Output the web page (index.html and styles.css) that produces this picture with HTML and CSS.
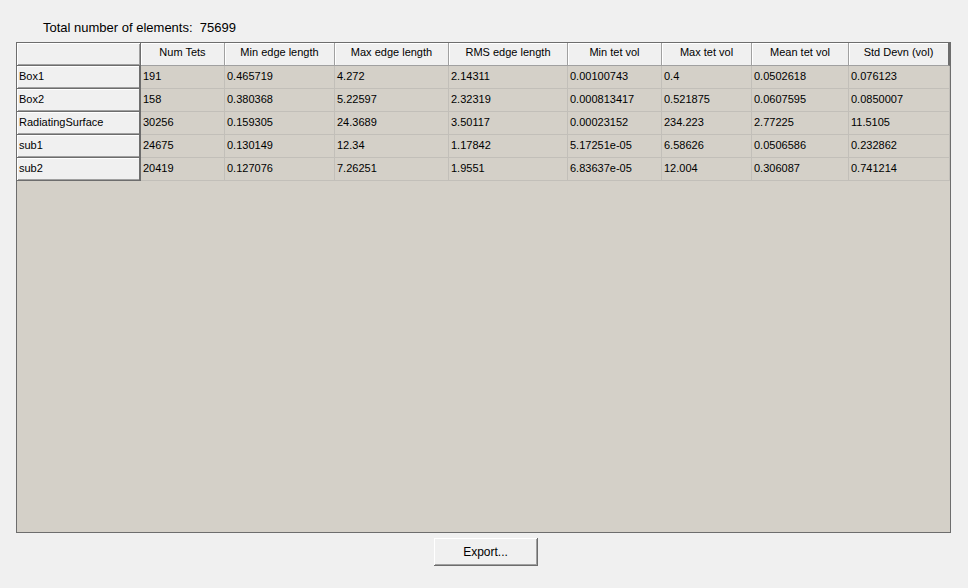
FILE: index.html
```html
<!DOCTYPE html>
<html>
<head>
<meta charset="utf-8">
<link rel="stylesheet" href="styles.css">
</head>
<body>
<div class="dialog">
  <div class="total">Total number of elements:&nbsp; 75699</div>
  <div class="table">
    <div class="grid">
      <div class="hcell corner"></div>
      <div class="hcell">Num Tets</div>
      <div class="hcell">Min edge length</div>
      <div class="hcell">Max edge length</div>
      <div class="hcell">RMS edge length</div>
      <div class="hcell">Min tet vol</div>
      <div class="hcell">Max tet vol</div>
      <div class="hcell">Mean tet vol</div>
      <div class="hcell last">Std Devn (vol)</div>

      <div class="rcell">Box1</div>
      <div class="cell">191</div><div class="cell">0.465719</div><div class="cell">4.272</div><div class="cell">2.14311</div><div class="cell">0.00100743</div><div class="cell">0.4</div><div class="cell">0.0502618</div><div class="cell">0.076123</div>

      <div class="rcell">Box2</div>
      <div class="cell">158</div><div class="cell">0.380368</div><div class="cell">5.22597</div><div class="cell">2.32319</div><div class="cell">0.000813417</div><div class="cell">0.521875</div><div class="cell">0.0607595</div><div class="cell">0.0850007</div>

      <div class="rcell">RadiatingSurface</div>
      <div class="cell">30256</div><div class="cell">0.159305</div><div class="cell">24.3689</div><div class="cell">3.50117</div><div class="cell">0.00023152</div><div class="cell">234.223</div><div class="cell">2.77225</div><div class="cell">11.5105</div>

      <div class="rcell">sub1</div>
      <div class="cell">24675</div><div class="cell">0.130149</div><div class="cell">12.34</div><div class="cell">1.17842</div><div class="cell">5.17251e-05</div><div class="cell">6.58626</div><div class="cell">0.0506586</div><div class="cell">0.232862</div>

      <div class="rcell">sub2</div>
      <div class="cell">20419</div><div class="cell">0.127076</div><div class="cell">7.26251</div><div class="cell">1.9551</div><div class="cell">6.83637e-05</div><div class="cell">12.004</div><div class="cell">0.306087</div><div class="cell">0.741214</div>
    </div>
  </div>
  <div class="actions">
    <button class="btn">Export...</button>
  </div>
</div>
</body>
</html>
```
FILE: styles.css
```css
html, body {
  margin: 0;
  padding: 0;
  background: #f0f0f0;
}
body {
  font-family: "Liberation Sans", Arial, sans-serif;
  color: #000;
}
.dialog {
  width: 968px;
  height: 588px;
  padding-top: 20px;
  box-sizing: border-box;
}
.total {
  font-size: 13px;
  line-height: 16px;
  height: 22px;
  padding-left: 43px;
  padding-top: 0;
  box-sizing: border-box;
}
.table {
  margin-left: 16px;
  width: 935px;
  height: 491px;
  box-sizing: border-box;
  border: 1px solid #6d6d6d;
  background: #d4d0c8;
}
.grid {
  display: grid;
  grid-template-columns: 124px 84px 110px 114px 119px 94px 90px 97px 101px;
  grid-auto-rows: 23px;
  font-size: 11px;
}
.hcell {
  box-sizing: border-box;
  background: #f0f0f0;
  border-right: 1px solid #a0a0a0;
  border-bottom: 1px solid #a0a0a0;
  box-shadow: inset 1px 1px #ffffff;
  display: flex;
  align-items: center;
  justify-content: center;
  padding-bottom: 4px;
  white-space: nowrap;
}
.hcell.corner {
  border-right: 1px solid #6d6d6d;
  border-bottom: 1px solid #6d6d6d;
  box-shadow: inset 1px 1px #ffffff, inset -1px -1px #a0a0a0;
}
.hcell.last {
  border-right: 2px solid #6d6d6d;
}
.rcell {
  box-sizing: border-box;
  background: #f0f0f0;
  border-right: 2px solid #6d6d6d;
  border-bottom: 1px solid #6d6d6d;
  box-shadow: inset 1px 1px #ffffff, inset 0 -1px #a0a0a0;
  display: flex;
  align-items: center;
  padding-left: 2px;
  padding-bottom: 3px;
  white-space: nowrap;
}
.cell {
  box-sizing: border-box;
  border-right: 1px solid #c2bfb9;
  border-bottom: 1px solid #c2bfb9;
  display: flex;
  align-items: center;
  padding-left: 2px;
  padding-bottom: 3px;
  white-space: nowrap;
}
.actions {
  display: flex;
  justify-content: center;
  padding-top: 5px;
  padding-left: 4px;
}
.btn {
  width: 104px;
  height: 28px;
  box-sizing: border-box;
  background: #f0f0f0;
  font-family: "Liberation Sans", Arial, sans-serif;
  font-size: 12px;
  color: #000;
  border: none;
  border-right: 1px solid #6d6d6d;
  border-bottom: 1px solid #6d6d6d;
  box-shadow: inset 1px 1px #ffffff, inset -1px -1px #a0a0a0;
  padding: 0;
  margin: 0;
}
```
